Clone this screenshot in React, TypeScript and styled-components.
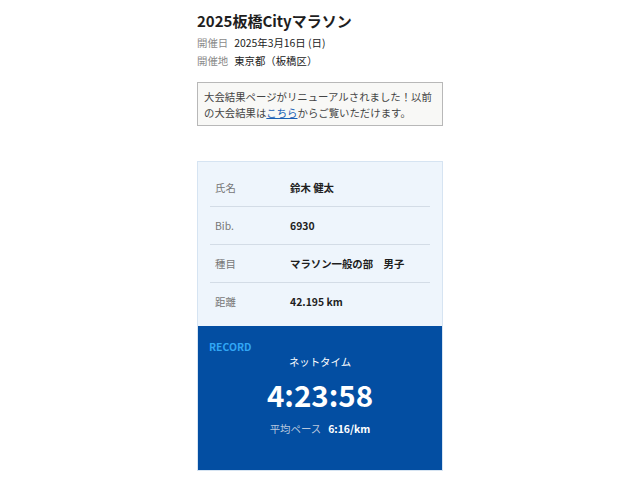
import React from "react";
import styled, { createGlobalStyle } from "styled-components";

const Global = createGlobalStyle`
  html, body { margin: 0; padding: 0; background: #fff; }
  body { font-family: "Noto Sans CJK JP", "Noto Sans", sans-serif; color: #222; }
`;

const Page = styled.div`
  width: 246px;
  margin: 0 auto;
  padding-top: 10px;
`;

const Title = styled.h1`
  margin: 0;
  font-size: 15px;
  line-height: 22px;
  font-weight: 700;
  color: #1e1e1e;
`;

const MetaList = styled.div`
  margin-top: 2px;
`;

const Meta = styled.div`
  display: flex;
  gap: 6px;
  font-size: 10.4px;
  line-height: 18px;
`;

const MetaLabel = styled.span`
  color: #8a8a8a;
`;

const MetaValue = styled.span`
  color: #222;
`;

const Notice = styled.div`
  margin-top: 12px;
  border: 1px solid #b8b8b8;
  background: #f8f8f6;
  padding: 6px 6px 5px;
  font-size: 10.4px;
  line-height: 15.5px;
  color: #444;
`;

const Link = styled.a`
  color: #1a5fb4;
  text-decoration: underline;
`;

const Card = styled.div`
  margin-top: 35px;
  border: 1px solid #d6e4f2;
`;

const InfoSection = styled.div`
  background: #eef5fc;
  padding: 7px 12px 6px;
`;

const Row = styled.div<{ $last?: boolean }>`
  display: flex;
  align-items: center;
  height: 37px;
  padding: 0 5px;
  font-size: 10.4px;
  border-bottom: ${(p) => (p.$last ? "none" : "1px solid #d3dce6")};
`;

const RowLabel = styled.span`
  width: 75px;
  color: #777;
`;

const RowValue = styled.span`
  font-weight: 700;
  color: #1e1e1e;
`;

const Record = styled.div`
  background: #034ea2;
  height: 144px;
  padding: 14px 11px 0;
  box-sizing: border-box;
  color: #fff;
`;

const RecordLabel = styled.div`
  color: #31a6f5;
  font-weight: 700;
  font-size: 10.4px;
  line-height: 14px;
`;

const NetLabel = styled.div`
  text-align: center;
  font-size: 10.4px;
  line-height: 16px;
`;

const Time = styled.div`
  text-align: center;
  font-size: 29.5px;
  font-weight: 700;
  line-height: 40px;
  margin-top: 4px;
`;

const Pace = styled.div`
  text-align: center;
  font-size: 10.4px;
  line-height: 16px;
  margin-top: 7px;
`;

const PaceLabel = styled.span`
  color: #b9c8de;
  margin-right: 7px;
`;

const PaceValue = styled.span`
  font-weight: 700;
`;

const rows = [
  ["氏名", "鈴木 健太"],
  ["Bib.", "6930"],
  ["種目", "マラソン一般の部　男子"],
  ["距離", "42.195 km"],
];

export default function App() {
  return (
    <>
      <Global />
      <Page>
        <Title>2025板橋Cityマラソン</Title>
        <MetaList>
          <Meta>
            <MetaLabel>開催日</MetaLabel>
            <MetaValue>2025年3月16日 (日)</MetaValue>
          </Meta>
          <Meta>
            <MetaLabel>開催地</MetaLabel>
            <MetaValue>東京都（板橋区）</MetaValue>
          </Meta>
        </MetaList>
        <Notice>
          大会結果ページがリニューアルされました！以前の大会結果は<Link href="#">こちら</Link>からご覧いただけます。
        </Notice>
        <Card>
          <InfoSection>
            {rows.map(([l, v], i) => (
              <Row key={l} $last={i === rows.length - 1}>
                <RowLabel>{l}</RowLabel>
                <RowValue>{v}</RowValue>
              </Row>
            ))}
          </InfoSection>
          <Record>
            <RecordLabel>RECORD</RecordLabel>
            <NetLabel>ネットタイム</NetLabel>
            <Time>4:23:58</Time>
            <Pace>
              <PaceLabel>平均ペース</PaceLabel>
              <PaceValue>6:16/km</PaceValue>
            </Pace>
          </Record>
        </Card>
      </Page>
    </>
  );
}
